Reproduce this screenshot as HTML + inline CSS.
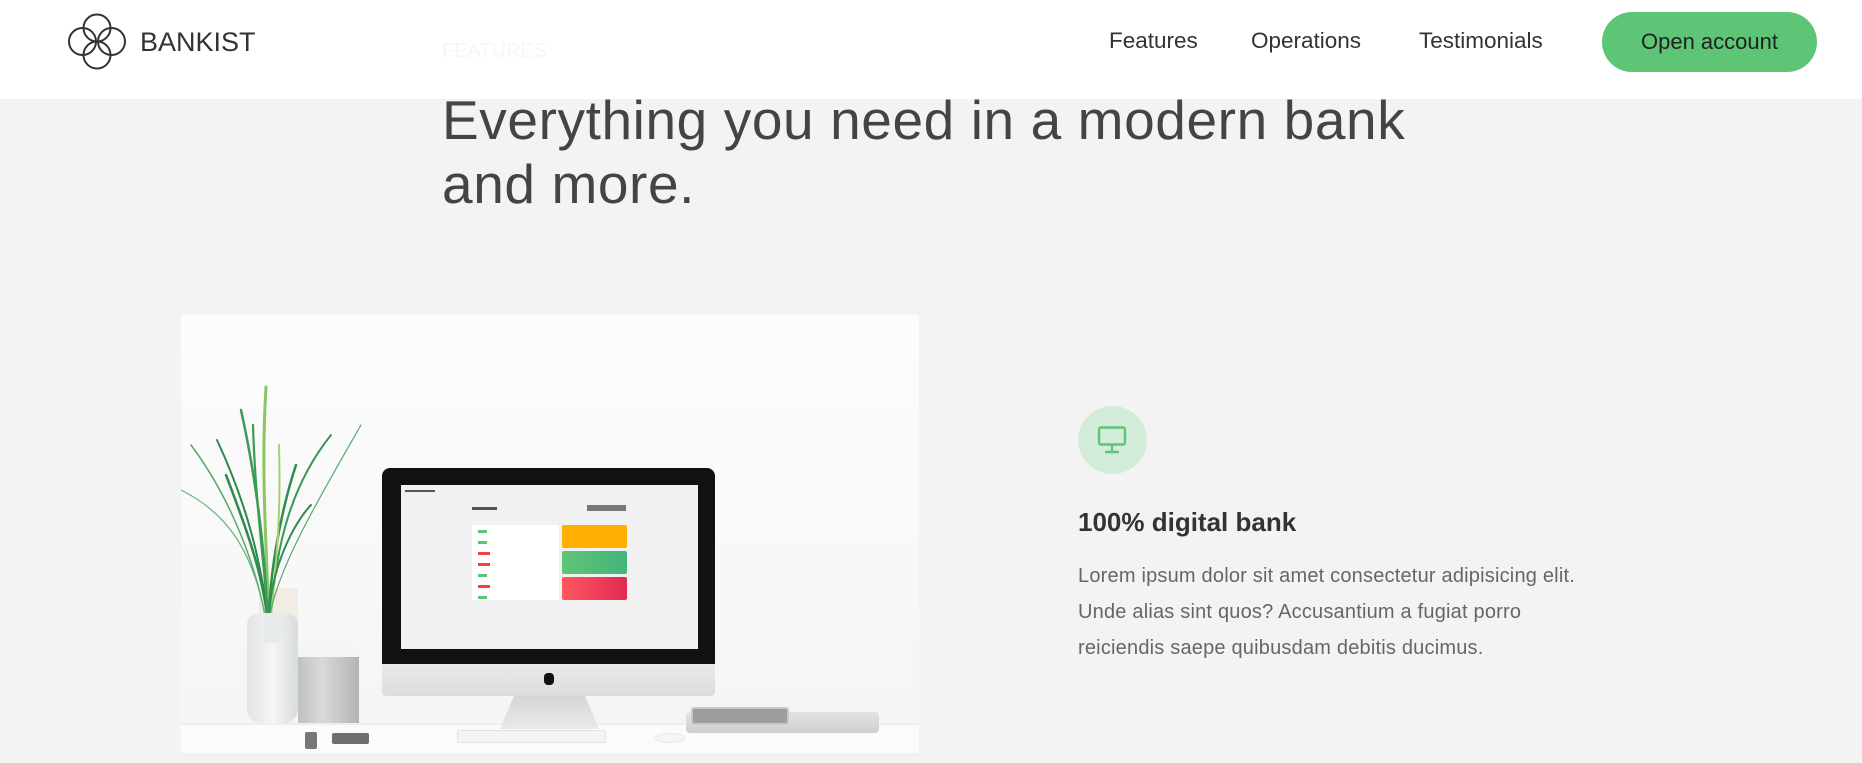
<!DOCTYPE html>
<html><head><meta charset="utf-8"><style>
*{margin:0;padding:0;box-sizing:border-box}
body{width:1862px;height:763px;overflow:hidden;background:#f3f3f3;font-family:"Liberation Sans",sans-serif;color:#444;position:relative}
.nav{position:absolute;left:0;top:0;width:1862px;height:99px;background:#fff}
.a{position:absolute;white-space:nowrap}
.link{font-size:22.5px;color:#333;top:28px}
.btn{position:absolute;left:1602px;top:12px;width:215px;height:60px;border-radius:30px;background:#5ec576;color:#222;font-size:22px;text-align:center;line-height:60px}
h1{position:absolute;left:442px;top:88px;font-size:55px;font-weight:normal;line-height:64px;color:#444;letter-spacing:0.6px}
.img{position:absolute;left:181px;top:315px;width:738px;height:442px;background:linear-gradient(180deg,#fcfcfc 0%,#f8f8f8 60%,#f4f4f4 100%);overflow:hidden}
.p{position:absolute;left:1078px;font-size:20px;color:#666;white-space:nowrap;letter-spacing:0.2px}
</style></head><body>

<div class="img">
  <div class="a" style="left:78px;top:273px;width:39px;height:49px;background:#f1ece4;border-radius:2px"></div>
  <svg class="a" style="left:0;top:0" width="738" height="442">
    <g fill="none" stroke-linecap="round">
      <path d="M88 300 C85 230 80 150 85 72" stroke="#8cc65e" stroke-width="3"/>
      <path d="M86 300 C84 220 70 140 60 95" stroke="#3c9a5a" stroke-width="2.5"/>
      <path d="M90 300 C95 230 110 170 150 120" stroke="#3a9656" stroke-width="2"/>
      <path d="M84 300 C70 230 40 170 10 130" stroke="#56a86a" stroke-width="1.5"/>
      <path d="M84 300 C72 240 50 200 0 175" stroke="#6bb07b" stroke-width="1.2"/>
      <path d="M88 300 C90 240 105 180 115 150" stroke="#2f8c50" stroke-width="2.5"/>
      <path d="M86 300 C80 250 60 200 45 160" stroke="#2e8a4c" stroke-width="2.5"/>
      <path d="M90 300 C96 240 100 200 98 130" stroke="#a2d26e" stroke-width="2"/>
      <path d="M88 300 C92 240 120 200 130 190" stroke="#2f8c50" stroke-width="2"/>
      <path d="M87 300 C78 240 66 190 36 125" stroke="#2a8a4a" stroke-width="2"/>
      <path d="M89 300 C98 250 140 180 180 110" stroke="#5aaa6a" stroke-width="1.2"/>
      <path d="M87 300 C82 240 74 180 72 110" stroke="#3a9a56" stroke-width="2.2"/>
    </g>
  </svg>
  <div class="a" style="left:66px;top:298px;width:51px;height:111px;background:linear-gradient(90deg,#dfe2e2,#f4f5f5,#d6d9d9);border-radius:12px 12px 16px 16px;opacity:.9"></div>
  <div class="a" style="left:83px;top:298px;width:17px;height:30px;background:#e8ebeb"></div>
  <div class="a" style="left:117px;top:330px;width:61px;height:83px;background:linear-gradient(90deg,#bfc1c1,#d8d9d9 40%,#b3b5b5);border-radius:4px;border-top:12px solid #f5f5f5"></div>
  <div class="a" style="left:0;top:408px;width:738px;height:34px;background:#fbfbfb;border-top:2px solid #eee"></div>
  <div class="a" style="left:0;top:438px;width:738px;height:4px;background:#f1f1f1"></div>
  <div class="a" style="left:201px;top:153px;width:333px;height:196px;background:#111;border-radius:8px 8px 0 0"></div>
  <div class="a" style="left:201px;top:349px;width:333px;height:32px;background:linear-gradient(#e9eaea,#dcdddd);border-radius:0 0 4px 4px"></div>
  <div class="a" style="left:363px;top:358px;width:10px;height:12px;background:#111;border-radius:4px"></div>
  <div class="a" style="left:319px;top:381px;width:99px;height:33px;background:linear-gradient(#d5d6d6,#e9e9e9);clip-path:polygon(14% 0,86% 0,100% 100%,0 100%)"></div>
  <div class="a" style="left:220px;top:170px;width:297px;height:164px;background:#f1f1f1">
    <div class="a" style="left:4px;top:5px;width:30px;height:2px;background:#555"></div>
    <div class="a" style="left:71px;top:22px;width:25px;height:3px;background:#555"></div>
    <div class="a" style="left:186px;top:20px;width:39px;height:6px;background:#777"></div>
    <div class="a" style="left:71px;top:40px;width:87px;height:75px;background:#fff"></div>
    <div class="a" style="left:161px;top:40px;width:65px;height:23px;background:#ffb003;border-radius:2px"></div>
    <div class="a" style="left:161px;top:66px;width:65px;height:23px;background:linear-gradient(90deg,#5ec576,#44b47a);border-radius:2px"></div>
    <div class="a" style="left:161px;top:92px;width:65px;height:23px;background:linear-gradient(90deg,#ff585f,#e02a53);border-radius:2px"></div>
    <div class="a" style="left:77px;top:45px;width:9px;height:3px;background:#5ec576"></div>
    <div class="a" style="left:77px;top:56px;width:9px;height:3px;background:#5ec576"></div>
    <div class="a" style="left:77px;top:67px;width:12px;height:3px;background:#e44"></div>
    <div class="a" style="left:77px;top:78px;width:12px;height:3px;background:#e44"></div>
    <div class="a" style="left:77px;top:89px;width:9px;height:3px;background:#5ec576"></div>
    <div class="a" style="left:77px;top:100px;width:12px;height:3px;background:#e44"></div>
    <div class="a" style="left:77px;top:111px;width:9px;height:3px;background:#5ec576"></div>
  </div>
  <div class="a" style="left:276px;top:415px;width:149px;height:13px;background:#f4f4f4;border:1px solid #e2e2e2;border-radius:2px"></div>
  <div class="a" style="left:124px;top:417px;width:12px;height:17px;background:#777;border-radius:2px"></div>
  <div class="a" style="left:151px;top:418px;width:37px;height:11px;background:#6e7070;border-radius:2px"></div>
  <div class="a" style="left:474px;top:418px;width:30px;height:10px;background:#f5f5f5;border-radius:50%;border:1px solid #e4e4e4"></div>
  <div class="a" style="left:505px;top:397px;width:193px;height:21px;background:linear-gradient(#e3e3e3,#cfcfcf);border-radius:4px"></div>
  <div class="a" style="left:510px;top:392px;width:98px;height:18px;background:#9c9e9e;border-radius:3px;border:2px solid #c8c8c8"></div>
</div>

<h1>Everything you need in a modern bank<br>and more.</h1>

<div class="nav">
  <svg class="a" style="left:66px;top:12px" width="62" height="60" viewBox="0 0 62 60">
    <g fill="none" stroke="#333" stroke-width="2">
      <circle cx="31" cy="16" r="13.5"/><circle cx="31" cy="43" r="13.5"/>
      <circle cx="16.5" cy="29.5" r="13.5"/><circle cx="45.5" cy="29.5" r="13.5"/>
    </g>
  </svg>
  <div class="a" style="left:140px;top:27px;font-size:27px;color:#333">BANKIST</div>
  <div class="a link" style="left:1109px">Features</div>
  <div class="a link" style="left:1251px">Operations</div>
  <div class="a link" style="left:1419px">Testimonials</div>
  <div class="btn">Open account</div>
</div>
<div class="a" style="left:442px;top:40px;font-size:20px;color:#f1f9f3">FEATURES</div>

<div class="a" style="left:1078px;top:406px;width:69px;height:68px;border-radius:50%;background:#d3ecd9"></div>
<svg class="a" style="left:1096px;top:425px" width="32" height="30" viewBox="0 0 32 30">
  <g fill="none" stroke="#5ec576" stroke-width="2.4" stroke-linecap="round" stroke-linejoin="round">
    <rect x="3" y="2.5" width="26" height="17" rx="2"/><path d="M16 20v6M10 27h12"/>
  </g>
</svg>
<div class="a" style="left:1078px;top:507px;font-size:26px;font-weight:bold;color:#333">100% digital bank</div>
<div class="p" style="top:565px">Lorem ipsum dolor sit amet consectetur adipisicing elit.</div>
<div class="p" style="top:601px">Unde alias sint quos? Accusantium a fugiat porro</div>
<div class="p" style="top:637px">reiciendis saepe quibusdam debitis ducimus.</div>
</body></html>
